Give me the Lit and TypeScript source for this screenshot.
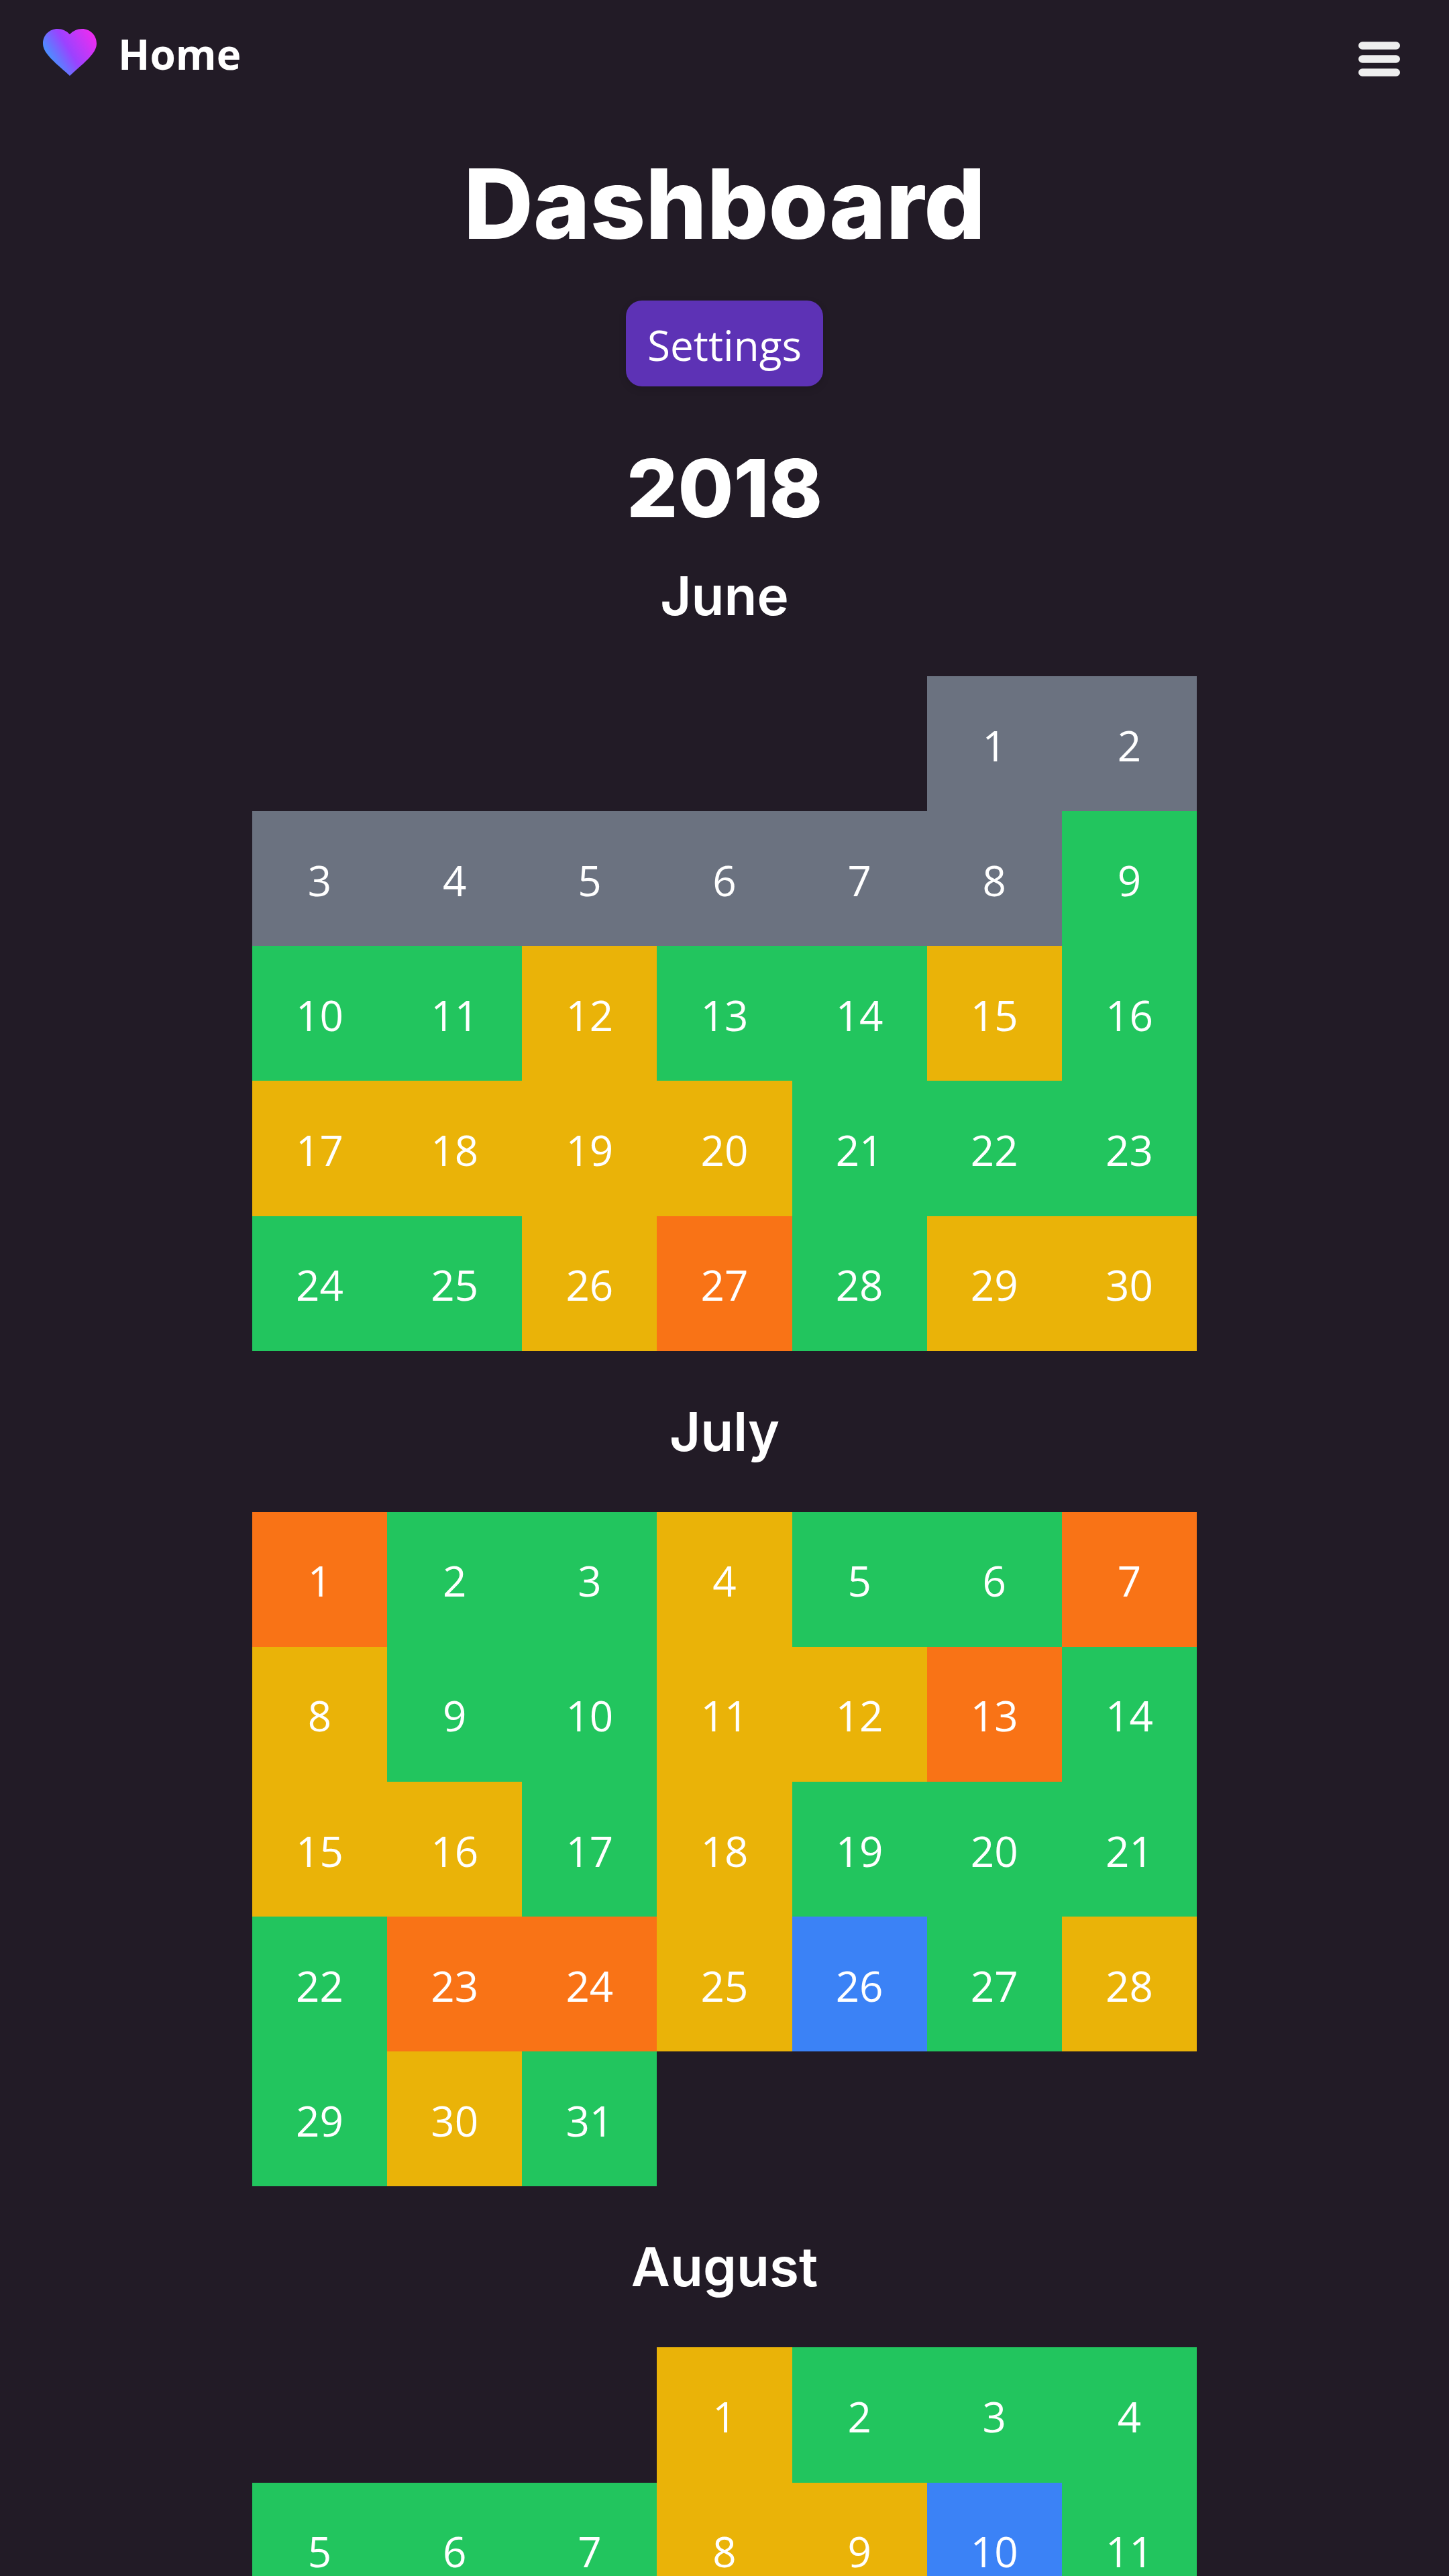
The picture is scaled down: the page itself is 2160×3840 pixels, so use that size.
import { LitElement, html, css } from "lit";
import { customElement, property } from "lit/decorators.js";
import { styleMap } from "lit/directives/style-map.js";

type Level = "none" | "good" | "fair" | "low" | "calm";

interface Month {
  name: string;
  /** Number of empty weekday columns before the first day. */
  offset: number;
  /** One letter per day, keyed by LEVELS. */
  days: string;
}

const LEVELS: Record<string, Level> = {
  n: "none",
  g: "good",
  y: "fair",
  o: "low",
  b: "calm",
};

const YEAR = "2018";

const MONTHS: Month[] = [
  { name: "June", offset: 5, days: "nn" + "nnnnnng" + "ggyggyg" + "yyyyggg" + "ggyogyy" },
  { name: "July", offset: 0, days: "oggyggo" + "yggyyog" + "yygyggg" + "gooybgy" + "gyg" },
  { name: "August", offset: 3, days: "yggg" + "gggyybg" },
];

@customElement("month-calendar")
export class MonthCalendar extends LitElement {
  @property() name = "";
  @property({ type: Number }) offset = 0;
  @property() days = "";

  static styles = css`
    :host {
      display: block;
    }
    .title {
      margin: 0 0 64px;
      font: 600 80px/112px Inter, sans-serif;
      text-align: center;
    }
    .days {
      display: grid;
      grid-template-columns: repeat(7, 1fr);
      margin: 0;
      padding: 0;
      list-style: none;
    }
    .day {
      display: flex;
      align-items: center;
      justify-content: center;
      box-sizing: border-box;
      aspect-ratio: 1;
      padding-top: 4px;
    }
    .none {
      background: #6b7280;
    }
    .good {
      background: #22c55e;
    }
    .fair {
      background: #eab308;
    }
    .low {
      background: #f97316;
    }
    .calm {
      background: #3b82f6;
    }
  `;

  render() {
    return html`
      <h3 class="title">${this.name}</h3>
      <ol class="days">
        ${[...this.days].map(
          (key, i) => html`<li
            class="day ${LEVELS[key]}"
            style=${styleMap(i === 0 ? { gridColumnStart: String(this.offset + 1) } : {})}
          >${i + 1}</li>`
        )}
      </ol>
    `;
  }
}

@customElement("app-root")
export class AppRoot extends LitElement {
  static styles = css`
    :host {
      display: block;
      min-height: 100vh;
      background: #221b26;
      color: #fff;
      font: 400 62px/96px "Open Sans", sans-serif;
    }
    .header {
      display: flex;
      align-items: center;
      justify-content: space-between;
      height: 160px;
      padding: 0 64px;
    }
    .brand {
      display: flex;
      align-items: center;
      gap: 32px;
      color: inherit;
      font-weight: 700;
      text-decoration: none;
    }
    .icon {
      display: block;
      width: 80px;
      height: 80px;
    }
    .menu {
      padding: 0;
      border: 0;
      background: none;
      color: #eee;
      cursor: pointer;
    }
    .main {
      display: flex;
      flex-direction: column;
      align-items: center;
      padding-top: 64px;
    }
    .heading {
      margin: 0 0 64px;
      font: 800 144px/160px Inter, sans-serif;
    }
    .settings {
      padding: 18px 32px 14px;
      border: 0;
      border-radius: 24px;
      background: #5d32b5;
      box-shadow: 0 4px 12px rgb(0 0 0 / 0.15);
      color: inherit;
      font: inherit;
      cursor: pointer;
    }
    .year {
      margin: 80px 0 32px;
      font: 800 120px/144px Inter, sans-serif;
    }
    .months {
      display: flex;
      flex-direction: column;
      gap: 64px;
      width: 100%;
      max-width: 1408px;
    }
  `;

  render() {
    return html`
      <header class="header">
        <a class="brand" href="#">
          <svg class="icon" viewBox="0 0 80 80" aria-hidden="true">
            <defs>
              <linearGradient id="heart" gradientUnits="userSpaceOnUse" x1="14" y1="50" x2="77" y2="12">
                <stop offset="0" stop-color="#4f8bff" />
                <stop offset="0.4" stop-color="#9b42ff" />
                <stop offset="1" stop-color="#ee2cf0" />
              </linearGradient>
            </defs>
            <path
              fill="url(#heart)"
              d="M40 73 34 67.6C13.6 49.6 0 38 0 24.8 0 12.6 9.6 3 21.8 3 28.8 3 35.6 6.2 40 11.3 44.4 6.2 51.2 3 58.2 3 70.4 3 80 12.6 80 24.8 80 38 66.4 49.6 46 67.6Z"
            />
          </svg>
          <span>Home</span>
        </a>
        <button class="menu" type="button" aria-label="Menu">
          <svg class="icon" viewBox="0 0 80 80" fill="currentColor" aria-hidden="true">
            <rect x="9" y="22.2" width="62" height="11.6" rx="5.8" />
            <rect x="9" y="42.2" width="62" height="11.6" rx="5.8" />
            <rect x="9" y="62.2" width="62" height="11.6" rx="5.8" />
          </svg>
        </button>
      </header>
      <main class="main">
        <h1 class="heading">Dashboard</h1>
        <button class="settings" type="button">Settings</button>
        <h2 class="year">${YEAR}</h2>
        <div class="months">
          ${MONTHS.map(
            (m) => html`<month-calendar
              name=${m.name}
              offset=${m.offset}
              days=${m.days}
            ></month-calendar>`
          )}
        </div>
      </main>
    `;
  }
}
